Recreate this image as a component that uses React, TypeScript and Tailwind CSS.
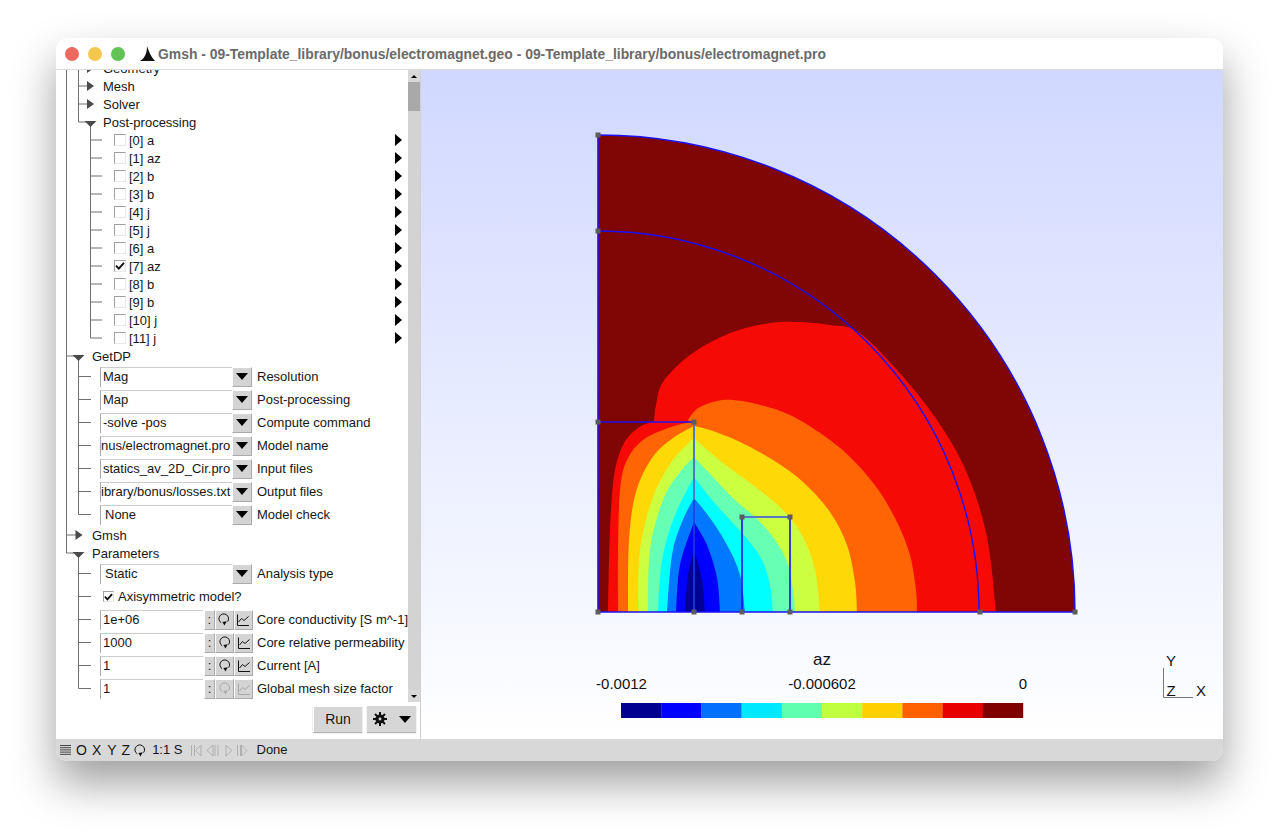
import React from "react";

type Guide = {
  height: number;
  width: number;
  lines?: [number, "full" | "top" | "bottom"][];
  stub?: [number, number];
  arrow?: ["right" | "down", number];
};

const L0 = 10.5;
const L1 = 22.5;
const L2 = 34.5;

// tree connector lines for one row of the options tree
function TreeGuide({ height, width, lines = [], stub, arrow }: Guide) {
  const mid = height / 2;
  return (
    <svg width={width} height={height} className="shrink-0" stroke="#6f6f6f" strokeWidth="1">
      {lines.map(([x, kind]) => (
        <line
          key={x}
          x1={x}
          x2={x}
          y1={kind === "bottom" ? mid : 0}
          y2={kind === "top" ? mid : height}
        />
      ))}
      {stub && <line x1={stub[0]} x2={stub[1]} y1={mid} y2={mid} />}
      {arrow && arrow[0] === "right" && (
        <polygon
          points={`${arrow[1] - 3},${mid - 5} ${arrow[1] + 4},${mid} ${arrow[1] - 3},${mid + 5}`}
          fill="#4a4a4a"
          stroke="none"
        />
      )}
      {arrow && arrow[0] === "down" && (
        <polygon
          points={`${arrow[1] - 6},${mid - 1} ${arrow[1] + 6},${mid - 1} ${arrow[1]},${mid + 5}`}
          fill="#4a4a4a"
          stroke="none"
        />
      )}
    </svg>
  );
}

function Check({ on, size = "h-[12px] w-[12px]" }: { on?: boolean; size?: string }) {
  return (
    <span
      className={`${size} shrink-0 flex items-center justify-center bg-white border border-t-[#a0a0a0] border-l-[#a0a0a0] border-r-[#e8e8e8] border-b-[#e8e8e8]`}
    >
      {on && (
        <svg width="10" height="10" viewBox="0 0 10 10" fill="none" stroke="#111" strokeWidth="2">
          <path d="M1 4.6 L3.8 7.6 L9 1.8" />
        </svg>
      )}
    </span>
  );
}

function NodeRow({ label, lines, stub, arrow, width }: { label: string } & Omit<Guide, "height">) {
  return (
    <div className="flex h-[18px] items-center">
      <TreeGuide height={18} width={width} lines={lines} stub={stub} arrow={arrow} />
      <span className="pt-[2px]">{label}</span>
    </div>
  );
}

function ViewRow({ label, on, last }: { label: string; on?: boolean; last?: boolean }) {
  return (
    <div className="flex h-[18px] items-center">
      <TreeGuide
        height={18}
        width={58}
        lines={[
          [L0, "full"],
          [L2, last ? "top" : "full"],
        ]}
        stub={[34.5, 46]}
      />
      <Check on={on} />
      <span className="ml-[3px] pt-[2px]">{label}</span>
      <svg width="7" height="12" className="ml-auto mr-[6px]" fill="#000">
        <polygon points="0,0 7,6 0,12" />
      </svg>
    </div>
  );
}

function ParamRow({
  last,
  outer,
  children,
}: {
  last?: boolean;
  outer?: boolean;
  children: React.ReactNode;
}) {
  const lines: [number, "full" | "top" | "bottom"][] = [[L1, last ? "top" : "full"]];
  if (outer) lines.unshift([L0, "full"]);
  return (
    <div className="flex h-[23px] items-center">
      <TreeGuide height={23} width={44} lines={lines} stub={[22.5, 35]} />
      {children}
    </div>
  );
}

function ChoiceRow(props: { value: string; label: string; pad?: string; last?: boolean; outer?: boolean }) {
  return (
    <ParamRow last={props.last} outer={props.outer}>
      <div
        className={`h-[20px] w-[132px] bg-white overflow-hidden whitespace-nowrap flex items-center pb-[1px] border-t border-l border-t-[#cccccc] border-l-[#aaaaaa] ${props.pad ?? "pl-[2px]"}`}
      >
        {props.value}
      </div>
      <div className="h-[20px] w-[20px] bg-[#d4d4d4] flex items-center justify-center border-t border-l border-white border-b-[#aaa] border-r-[#aaa] border-b border-r">
        <svg width="12" height="7" fill="#000">
          <polygon points="0,0 12,0 6,7" />
        </svg>
      </div>
      <span className="ml-[5px]">{props.label}</span>
    </ParamRow>
  );
}

function RotateIcon({ color = "#111" }: { color?: string }) {
  return (
    <svg width="12" height="13" viewBox="0 0 12 13" fill="none" stroke={color} strokeWidth="1">
      <path d="M3.2 9.8 A4.8 4.8 0 1 1 9.6 8.6" />
      <polygon points="4.4,9 8.8,8.2 6.4,12.4" fill={color} stroke="none" />
    </svg>
  );
}

function GraphIcon({ color = "#111" }: { color?: string }) {
  return (
    <svg width="12" height="12" viewBox="0 0 12 12" fill="none" stroke={color} strokeWidth="1">
      <path d="M0.5 0.5 V11.5 H12" />
      <path d="M1.5 8 L4.5 4.5 L7 6.5 L11.5 2.5" />
    </svg>
  );
}

function NumberRow(props: { value: string; label: string; last?: boolean; off?: boolean }) {
  const btn =
    "h-[20px] bg-[#d4d4d4] flex items-center justify-center border-t border-l border-white border-b border-r border-b-[#aaa] border-r-[#aaa]";
  return (
    <ParamRow last={props.last}>
      <div className="h-[20px] w-[103px] bg-white flex items-center pl-[2px] pb-[1px] border-t border-l border-t-[#cccccc] border-l-[#aaaaaa]">
        {props.value}
      </div>
      <div className={`${btn} ml-[1px] w-[11px] leading-none`}>:</div>
      <div className={`${btn} w-[19px]`}>
        <RotateIcon color={props.off ? "#a8a8a8" : "#111"} />
      </div>
      <div className={`${btn} w-[19px]`}>
        <GraphIcon color={props.off ? "#a8a8a8" : "#111"} />
      </div>
      <span className="ml-[4px] whitespace-nowrap">{props.label}</span>
    </ParamRow>
  );
}

function Scrollbar() {
  const end = "h-[12px] bg-[#d8d8d8] flex items-center justify-center border-white";
  return (
    <div className="w-[12px] shrink-0 bg-[#d3d3d3] flex flex-col">
      <div className={end}>
        <svg width="6" height="3" fill="#000">
          <polygon points="0,3 6,3 3,0" />
        </svg>
      </div>
      <div className="h-[29px] bg-[#a9a9a9]" />
      <div className="flex-1" />
      <div className={end}>
        <svg width="6" height="3" fill="#000">
          <polygon points="0,0 6,0 3,3" />
        </svg>
      </div>
    </div>
  );
}

const BAR = ["#000090", "#0000ff", "#0070ff", "#00e8ff", "#60ffb0", "#c0ff40", "#ffd000", "#ff6000", "#e80000", "#800000"];

type Pt = [number, number];

// catmull-rom through the contour points picked off the screenshot
function smooth(pts: Pt[]) {
  let d = "";
  for (let i = 0; i < pts.length - 1; i++) {
    const p0 = pts[i - 1] ?? pts[i];
    const p1 = pts[i];
    const p2 = pts[i + 1];
    const p3 = pts[i + 2] ?? p2;
    const c1x = p1[0] + (p2[0] - p0[0]) / 6;
    const c1y = p1[1] + (p2[1] - p0[1]) / 6;
    const c2x = p2[0] - (p3[0] - p1[0]) / 6;
    const c2y = p2[1] - (p3[1] - p1[1]) / 6;
    d += ` C${c1x} ${c1y} ${c2x} ${c2y} ${p2[0]} ${p2[1]}`;
  }
  return d;
}

function band(...parts: Pt[][]) {
  let d = `M${parts[0][0][0]} ${parts[0][0][1]}`;
  for (const part of parts) {
    d += ` L${part[0][0]} ${part[0][1]}` + smooth(part);
  }
  return d + " Z";
}

const BANDS: [string, string][] = [
  [
    "#f50a05",
    band(
      [[608, 612], [609, 560], [611, 510], [615, 470], [624, 443], [638, 428], [654, 421]],
      [[654, 421], [656, 405], [663, 382], [690, 355], [730, 333], [770, 323], [797, 322], [830, 325], [858, 332], [897, 370], [937, 420], [967, 473], [987, 537], [996, 612]],
    ),
  ],
  [
    "#ff6405",
    band(
      [[618, 612], [618, 550], [620, 490], [627, 460], [643, 440], [668, 428], [690, 422]],
      [[688, 420], [692, 414], [700, 407], [717, 401], [733, 400], [757, 404], [790, 415], [823, 435], [850, 457], [877, 488], [897, 522], [910, 555], [916, 590], [917, 612]],
    ),
  ],
  [
    "#ffd808",
    band(
      [[628, 612], [629, 540], [636, 492], [652, 458], [673, 438], [694, 426]],
      [[694, 426], [713, 431], [740, 442], [773, 460], [803, 482], [830, 512], [847, 545], [855, 582], [857, 612]],
    ),
  ],
  [
    "#ccff40",
    band(
      [[638, 612], [640, 550], [653, 497], [673, 460], [694, 438]],
      [[694, 438], [723, 463], [757, 488], [783, 510], [802, 535], [815, 570], [820, 612]],
    ),
  ],
  [
    "#66ffb4",
    band(
      [[648, 612], [650, 550], [663, 500], [680, 472], [694, 457]],
      [[694, 457], [712, 476], [735, 500], [758, 520], [775, 540], [787, 562], [793, 590], [795, 612]],
    ),
  ],
  [
    "#00ffff",
    band(
      [[658, 612], [662, 560], [675, 515], [694, 477]],
      [[694, 477], [712, 500], [730, 520], [748, 540], [762, 560], [770, 585], [773, 612]],
    ),
  ],
  [
    "#0078ff",
    band(
      [[667, 612], [672, 555], [682, 522], [694, 498]],
      [[694, 498], [710, 518], [727, 545], [740, 575], [745, 612]],
    ),
  ],
  [
    "#0000ff",
    band(
      [[676, 612], [680, 565], [694, 522]],
      [[694, 522], [707, 545], [717, 578], [720, 612]],
    ),
  ],
  [
    "#000096",
    band(
      [[685, 612], [688, 575], [694, 550]],
      [[694, 550], [702, 580], [705, 612]],
    ),
  ],
];

const POINTS = [
  [598, 135],
  [598, 231],
  [598, 422],
  [694, 422],
  [598, 612],
  [694, 612],
  [742, 612],
  [790, 612],
  [742, 517],
  [790, 517],
  [980, 612],
  [1075, 612],
];

// contour plot, drawn in page coordinates so numbers read straight off the screenshot
function Plot() {
  return (
    <svg viewBox="421 70 802 669" className="block h-full w-full" fill="none">
      <path d="M598 612 V135 A477 477 0 0 1 1075 612 Z" fill="#800505" />
      {BANDS.map(([color, d]) => (
        <path key={color} d={d} fill={color} />
      ))}
      <g stroke="#1c10f0" strokeWidth="1.4">
        <path d="M598 135 V612 H1075" strokeWidth="1.6" />
        <path d="M598 135 A477 477 0 0 1 1075 612" />
        <path d="M598 231 A381 381 0 0 1 979 612" />
        <path d="M598 422 H694" />
        <path d="M694 500 V612" stroke="#1a40e0" strokeWidth="1.6" />
        <path d="M742 517 V612 M790 517 V612" strokeWidth="1.6" />
        <path d="M694 422 V500" stroke="#4d78c8" strokeWidth="2" />
        <path d="M742 517 H790" stroke="#5a78c8" strokeWidth="2" />
      </g>
      {POINTS.map(([x, y]) => (
        <rect key={`${x}-${y}`} x={x - 2.5} y={y - 2.5} width="5" height="5" fill="#5c5c5c" />
      ))}
      {BAR.map((color, i) => (
        <rect key={color} x={621 + i * 40.2} y="703" width="40.4" height="15" fill={color} />
      ))}
      <g fill="#111" fontSize="15" textAnchor="middle">
        <text x="822" y="665" fontSize="17">
          az
        </text>
        <text x="621.5" y="689">
          -0.0012
        </text>
        <text x="822" y="689">
          -0.000602
        </text>
        <text x="1023" y="689">
          0
        </text>
        <text x="1171" y="666">
          Y
        </text>
        <text x="1171" y="696">
          Z
        </text>
        <text x="1201" y="696">
          X
        </text>
      </g>
      <path d="M1163.5 668 V697.5 H1193" stroke="#777" strokeWidth="1" />
    </svg>
  );
}

function StatusBar() {
  const dim = "#b0b0b0";
  return (
    <div className="h-[22px] shrink-0 bg-[#d8d8d8] flex items-center text-[14px] rounded-b-[12px] pl-[4px]">
      <svg width="12" height="12" stroke="#444" strokeWidth="1">
        <path d="M0 1.5 H11 M0 3.7 H11 M0 5.9 H11 M0 8.1 H11 M0 10.3 H11" />
      </svg>
      <span className="ml-[4px]">O</span>
      <span className="ml-[5px]">X</span>
      <span className="ml-[6px]">Y</span>
      <span className="ml-[5px]">Z</span>
      <span className="ml-[4px]">
        <RotateIcon />
      </span>
      <span className="ml-[6px] text-[13px]">1:1 S</span>
      <svg width="57" height="13" className="ml-[8px]" fill="none" stroke={dim} strokeWidth="1">
        <path d="M0.5 1 V12 M3.5 1 V12 M10 1 L4.5 6.5 L10 12 Z" />
        <path d="M22 1 L16 6.5 L22 12 Z M24 1 V12 M27 1 V12" />
        <path d="M35 1 L41 6.5 L35 12 Z" />
        <path d="M46.5 1 V12 M49.5 1 V12 M50.5 1 L56 6.5 L50.5 12 Z" />
      </svg>
      <span className="ml-[9px] text-[13px]">Done</span>
    </div>
  );
}

export default function App() {
  const views = ["[0] a", "[1] az", "[2] b", "[3] b", "[4] j", "[5] j", "[6] a", "[7] az", "[8] b", "[9] b", "[10] j"];
  return (
    <div className="h-[835px] w-[1279px] overflow-hidden bg-white pl-[56px] pt-[38px] font-['Liberation_Sans',Arial,sans-serif] text-[13px] text-[#161616]">
      <div className="flex h-[723px] w-[1167px] flex-col rounded-[12px] bg-white shadow-[0_22px_44px_rgba(0,0,0,0.38)]">
        <div className="flex h-[32px] shrink-0 items-center rounded-t-[12px] border-b border-[#dcdcdc] bg-white">
          <div className="ml-[9px] flex gap-[9px]">
            <span className="h-[14px] w-[14px] rounded-full bg-[#ec6a5e]" />
            <span className="h-[14px] w-[14px] rounded-full bg-[#f4c84f]" />
            <span className="h-[14px] w-[14px] rounded-full bg-[#61c454]" />
          </div>
          <svg width="15" height="16" className="ml-[15px]" viewBox="0 0 15 16">
            <path d="M7 0 C7 7 5 12 0 15 L15 15 C11 11 9 6 7 0 Z" fill="#111" />
          </svg>
          <span className="ml-[3px] whitespace-nowrap pt-[2px] text-[13.9px] font-bold text-[#6a6a6a]">
            Gmsh - 09-Template_library/bonus/electromagnet.geo - 09-Template_library/bonus/electromagnet.pro
          </span>
        </div>

        <div className="flex min-h-0 flex-1">
          <div className="flex w-[365px] shrink-0 flex-col border-r border-[#cfcfcf] bg-white">
            <div className="flex h-[632px] shrink-0">
              <div className="min-w-0 flex-1 overflow-hidden">
                <div className="-mt-[11px]">
                  <NodeRow label="Geometry" width={47} lines={[[L0, "full"], [L1, "full"]]} stub={[22.5, 32]} arrow={["right", 34]} />
                  <NodeRow label="Mesh" width={47} lines={[[L0, "full"], [L1, "full"]]} stub={[22.5, 32]} arrow={["right", 34]} />
                  <NodeRow label="Solver" width={47} lines={[[L0, "full"], [L1, "full"]]} stub={[22.5, 32]} arrow={["right", 34]} />
                  <NodeRow
                    label="Post-processing"
                    width={47}
                    lines={[[L0, "full"], [L1, "top"], [L2, "bottom"]]}
                    stub={[22.5, 30]}
                    arrow={["down", 34.5]}
                  />
                  {views.map((v, i) => (
                    <ViewRow key={v + i} label={v} on={i === 7} />
                  ))}
                  <ViewRow label="[11] j" last />
                  <NodeRow
                    label="GetDP"
                    width={36}
                    lines={[[L0, "full"], [L1, "bottom"]]}
                    stub={[10.5, 18]}
                    arrow={["down", 22.5]}
                  />
                  <ChoiceRow outer value="Mag" label="Resolution" />
                  <ChoiceRow outer value="Map" label="Post-processing" />
                  <ChoiceRow outer value="-solve -pos" label="Compute command" />
                  <ChoiceRow outer value="nus/electromagnet.pro" label="Model name" pad="" />
                  <ChoiceRow outer value="statics_av_2D_Cir.pro" label="Input files" />
                  <ChoiceRow outer value="ibrary/bonus/losses.txt" label="Output files" pad="" />
                  <ChoiceRow outer last value="None" label="Model check" pad="pl-[4px]" />
                  <NodeRow label="Gmsh" width={36} lines={[[L0, "full"]]} stub={[10.5, 20]} arrow={["right", 22.5]} />
                  <NodeRow
                    label="Parameters"
                    width={36}
                    lines={[[L0, "top"], [L1, "bottom"]]}
                    stub={[10.5, 18]}
                    arrow={["down", 22.5]}
                  />
                  <ChoiceRow value="Static" label="Analysis type" pad="pl-[4px]" />
                  <ParamRow>
                    <span className="ml-[3px] flex items-center gap-[4px]">
                      <Check on size="h-[11px] w-[11px]" />
                      Axisymmetric model?
                    </span>
                  </ParamRow>
                  <NumberRow value="1e+06" label="Core conductivity [S m^-1]" />
                  <NumberRow value="1000" label="Core relative permeability" />
                  <NumberRow value="1" label="Current [A]" />
                  <NumberRow value="1" label="Global mesh size factor" last off />
                </div>
              </div>
              <Scrollbar />
            </div>
            <div className="flex justify-end gap-[5px] pr-[4px] pt-[4px]">
              <div className="flex h-[26px] w-[49px] items-center justify-center border-t border-l border-white bg-[#d6d6d6] text-[14px] shadow-[0_1px_1px_rgba(0,0,0,0.3)]">
                Run
              </div>
              <div className="flex h-[26px] w-[49px] items-center justify-center gap-[12px] bg-[#d6d6d6] shadow-[0_1px_1px_rgba(0,0,0,0.3)]">
                <svg width="14" height="14" viewBox="0 0 14 14">
                  <g stroke="#111" strokeWidth="2">
                    <path d="M7 0 V14 M0 7 H14 M2 2 L12 12 M12 2 L2 12" />
                  </g>
                  <circle cx="7" cy="7" r="4.6" fill="#111" />
                  <circle cx="7" cy="7" r="1.4" fill="#d6d6d6" />
                </svg>
                <svg width="12" height="7" fill="#000">
                  <polygon points="0,0 12,0 6,7" />
                </svg>
              </div>
            </div>
          </div>
          <div className="min-w-0 flex-1 bg-linear-to-b from-[#d0d8ff] to-white">
            <Plot />
          </div>
        </div>

        <StatusBar />
      </div>
    </div>
  );
}
